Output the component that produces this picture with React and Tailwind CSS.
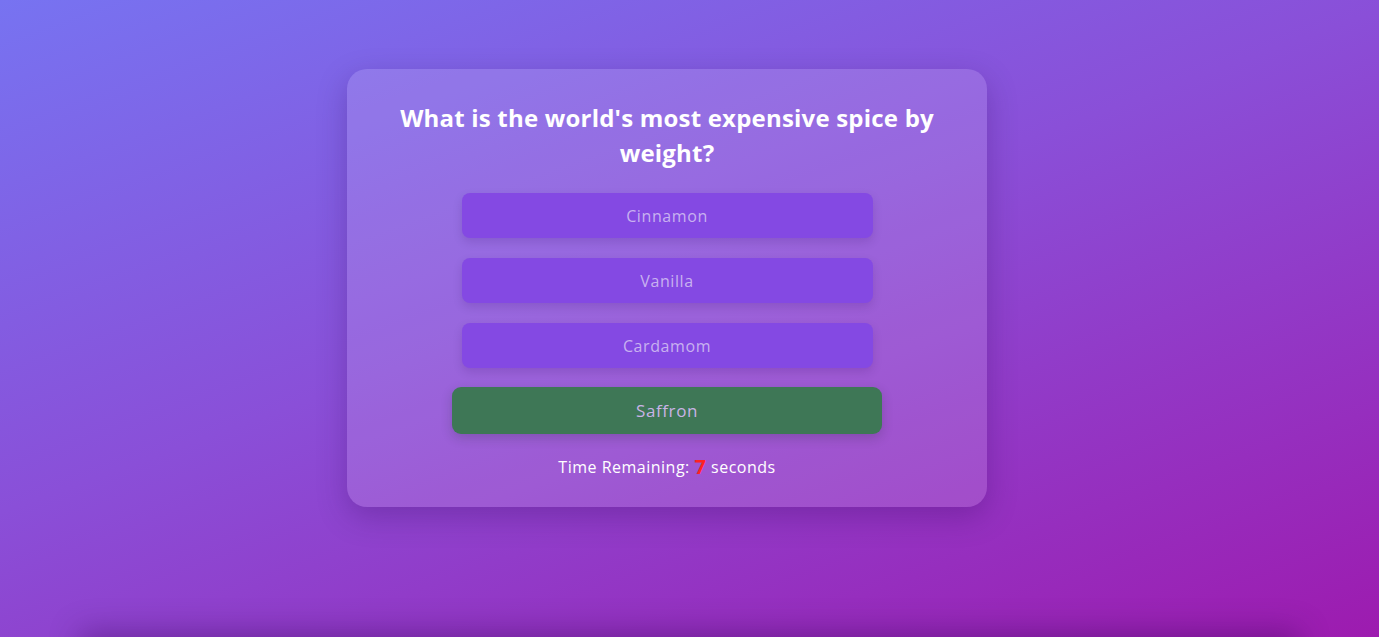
import React from "react";

const options = ["Cinnamon", "Vanilla", "Cardamom"];

export default function App() {
  return (
    <div
      className="h-[637px] w-full overflow-hidden flex flex-col bg-[linear-gradient(160deg,#7773f1_0%,#8a4fd8_45%,#9d1baf_100%)]"
      style={{ fontFamily: "'Open Sans', 'Noto Sans', sans-serif" }}
    >
      <div className="ml-[347px] mt-[69px] w-[640px] h-[438px] shrink-0 rounded-[20px] bg-white/[0.13] shadow-[0_10px_30px_rgba(40,0,80,0.25)] px-6 pt-[31px] flex flex-col items-center">
        <h1 className="text-[24px] leading-[35px] font-bold text-white text-center tracking-[0.2px] w-[560px]">
          What is the world's most expensive spice by weight?
        </h1>
        <div className="mt-[23px] flex flex-col items-center gap-5">
          {options.map((o) => (
            <div
              key={o}
              className="w-[411px] h-[45px] rounded-lg bg-[#8449e3] shadow-[0_4px_10px_rgba(40,0,90,0.15)] flex items-center justify-center text-[16px] font-medium tracking-[0.6px] text-[#c8b1f0]"
            >
              {o}
            </div>
          ))}
          <div className="w-[430px] h-[47px] -my-px rounded-[9px] bg-[#3e7756] shadow-[0_4px_12px_rgba(20,40,30,0.2)] flex items-center justify-center text-[17px] font-medium tracking-[0.6px] text-[#c9b3e6]">
            Saffron
          </div>
        </div>
        <div className="mt-[22px] text-[16px] font-medium text-white leading-6 tracking-[0.5px] flex items-center">
          <span>Time Remaining:&nbsp;</span>
          <span className="text-[#ff2222] text-[20px] font-bold">7</span>
          <span>&nbsp;seconds</span>
        </div>
      </div>
      <div className="mt-auto mb-[-60px] mx-[80px] h-[60px] shrink-0 shadow-[0_-6px_30px_rgba(50,0,80,0.35)]" />
    </div>
  );
}
